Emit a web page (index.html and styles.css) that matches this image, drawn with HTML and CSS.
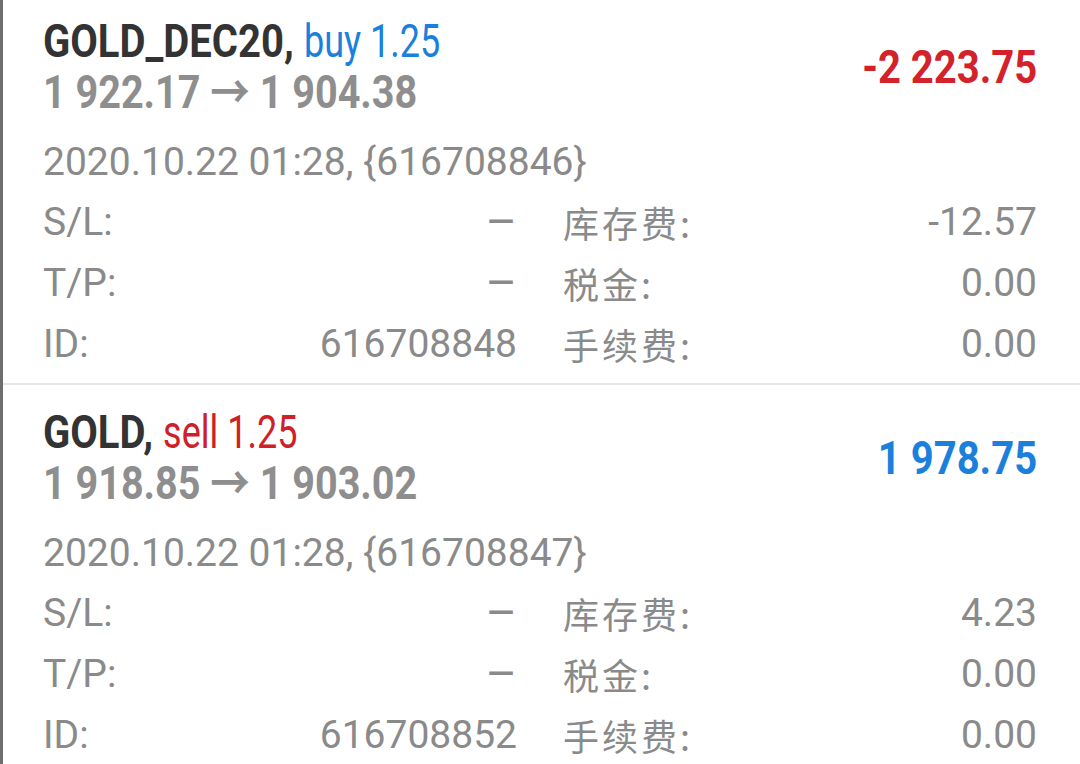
FILE: index.html
```html
<!DOCTYPE html>
<html lang="zh">

<head>
  <meta charset="UTF-8">
  <meta name="viewport" content="width=device-width, initial-scale=1.0">
  <title>持仓</title>
  <link rel="stylesheet" href="styles.css">
</head>

<body>
  <div class="positions">
    <!-- first position: buy -->
    <div class="position">
      <div class="head">
        <div class="head-text">
          <div class="line"><span class="cond"><b class="symbol">GOLD_DEC20,</b> <span class="side buy">buy 1.25</span></span></div>
          <div class="line"><span class="cond price">1 922.17 → 1 904.38</span></div>
        </div>
        <div class="profit loss"><span class="cond">-2 223.75</span></div>
      </div>
      <div class="time">2020.10.22 01:28, {616708846}</div>
      <div class="details">
        <div class="cell"><span>S/L:</span><span class="dash">–</span></div>
        <div class="cell"><span class="cn">库存费:</span><span>-12.57</span></div>
        <div class="cell"><span>T/P:</span><span class="dash">–</span></div>
        <div class="cell"><span class="cn">税金:</span><span>0.00</span></div>
        <div class="cell"><span>ID:</span><span>616708848</span></div>
        <div class="cell"><span class="cn">手续费:</span><span>0.00</span></div>
      </div>
    </div>

    <!-- second position: sell -->
    <div class="position">
      <div class="head">
        <div class="head-text">
          <div class="line"><span class="cond"><b class="symbol">GOLD,</b> <span class="side sell">sell 1.25</span></span></div>
          <div class="line"><span class="cond price">1 918.85 → 1 903.02</span></div>
        </div>
        <div class="profit gain"><span class="cond">1 978.75</span></div>
      </div>
      <div class="time">2020.10.22 01:28, {616708847}</div>
      <div class="details">
        <div class="cell"><span>S/L:</span><span class="dash">–</span></div>
        <div class="cell"><span class="cn">库存费:</span><span>4.23</span></div>
        <div class="cell"><span>T/P:</span><span class="dash">–</span></div>
        <div class="cell"><span class="cn">税金:</span><span>0.00</span></div>
        <div class="cell"><span>ID:</span><span>616708852</span></div>
        <div class="cell"><span class="cn">手续费:</span><span>0.00</span></div>
      </div>
    </div>
  </div>
</body>

</html>
```

FILE: styles.css
```css
* {
  box-sizing: border-box;
}

body {
  margin: 0;
  background: #fff;
  font-family: Roboto, "Noto Sans CJK SC", sans-serif;
  color: #8a8a8a;
}

.positions {
  border-left: 3px solid #6e6e6e;
  margin-top: -6px;
  min-height: 770px;
}

.position {
  padding: 22px 43px 9px 40px;
  border-bottom: 2px solid #e6e6e6;
}

.head {
  display: flex;
  justify-content: space-between;
  align-items: center;
}

.line {
  font-size: 46px;
  line-height: 51px;
  white-space: nowrap;
}

/* no condensed face installed, so squeeze Roboto */
.cond {
  display: inline-block;
  transform: scaleX(0.87);
  transform-origin: left center;
}

.symbol {
  font-weight: 700;
  color: #333;
}

.side {
  display: inline-block;
  transform: scaleX(0.9);
  transform-origin: left center;
}

.buy {
  color: #1b7fdc;
}

.sell {
  color: #cf2027;
}

.price {
  font-weight: 700;
  color: #8e8e8e;
  transform: scaleX(0.86);
}

.profit {
  font-size: 46px;
  font-weight: 700;
  white-space: nowrap;
}

.profit .cond {
  transform-origin: right center;
}

.loss {
  color: #d3222a;
}

.gain {
  color: #1b7fdc;
}

.time {
  margin-top: 20px;
  font-size: 39px;
  line-height: 48px;
}

.details {
  margin-top: 5px;
  display: grid;
  grid-template-columns: 1fr 1fr;
  column-gap: 46px;
  font-size: 39px;
}

.cell {
  height: 61px;
  display: flex;
  justify-content: space-between;
  align-items: center;
}

.cn {
  font-family: "Noto Sans CJK SC", sans-serif;
  font-size: 36px;
  letter-spacing: 3px;
}

.dash {
  font-size: 48px;
}
```
